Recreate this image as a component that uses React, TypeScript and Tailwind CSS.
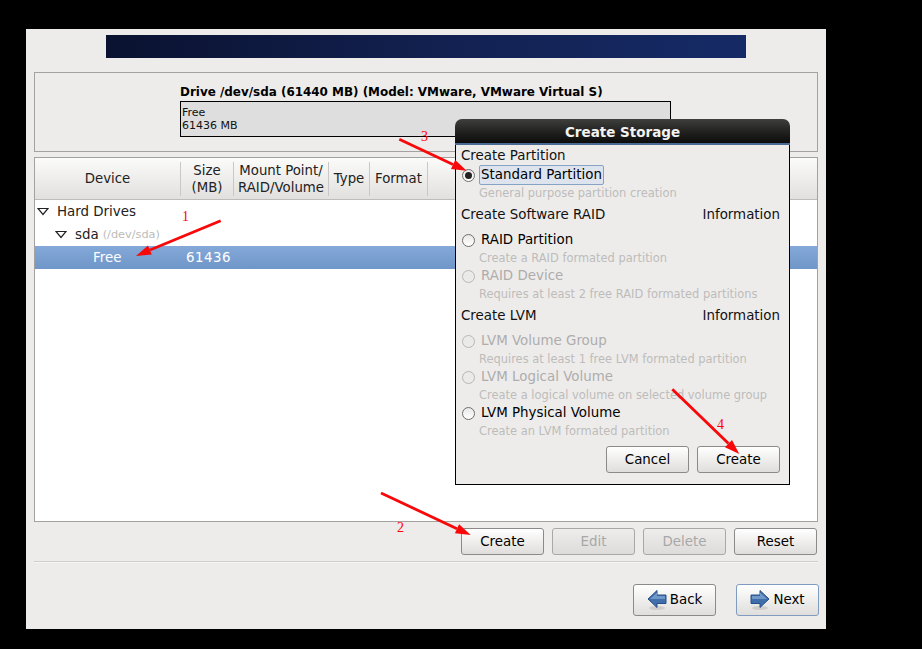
import React from "react";

const font = { fontFamily: '"DejaVu Sans", sans-serif' };

function Btn({ children, disabled, focus, w = "w-[83px]", h = "h-[27px] pt-[1px]" }: { children: React.ReactNode; disabled?: boolean; focus?: boolean; w?: string; h?: string }) {
  const cls = disabled
    ? "border-[#a9a8a6] bg-gradient-to-b from-[#eeedec] to-[#dddcda] text-[#a8a8a6]"
    : focus
    ? "border-[#7f9cc0] bg-gradient-to-b from-[#ffffff] to-[#dfdedc] text-black"
    : "border-[#8b8a88] bg-gradient-to-b from-[#ffffff] to-[#dfdedc] text-black";
  return <div className={`${w} ${h} ${cls} flex items-center justify-center gap-[3px] rounded-[3px] border text-[13.4px]`}>{children}</div>;
}

function Radio({ on, disabled }: { on?: boolean; disabled?: boolean }) {
  return (
    <span className={`ml-[6px] flex h-[13px] w-[13px] shrink-0 items-center justify-center rounded-full border ${disabled ? "border-[#b8b7b5] bg-[#eaeae8]" : "border-[#6f6e6c] bg-gradient-to-b from-[#e8e8e8] to-[#ffffff]"}`}>
      {on && <span className="h-[7px] w-[7px] rounded-full bg-[#222222]" />}
    </span>
  );
}

function Option({ label, desc, on, disabled, focus }: { label: string; desc: string; on?: boolean; disabled?: boolean; focus?: boolean }) {
  return (
    <div className="h-[36px]">
      <div className="flex h-[18px] items-center gap-[4px]">
        <Radio on={on} disabled={disabled} />
        <span className={`${focus ? "w-[125px] rounded-[2px] border border-[#86a3c6] bg-[#dde4ee] pl-[1px]" : "pl-[2px]"} flex h-[20px] items-center whitespace-nowrap text-[13.4px] ${disabled ? "text-[#aeadab]" : "text-black"}`}>{label}</span>
      </div>
      <div className="mt-[2px] flex h-[16px] items-center whitespace-nowrap pl-[23px] text-[11.45px] text-[#bdbcba]">{desc}</div>
    </div>
  );
}

function Head({ left, right, cls }: { left: string; right?: string; cls: string }) {
  return (
    <div className={`flex items-center justify-between pl-[5px] pr-[9px] text-[13.4px] text-[#111111] ${cls}`}>
      <span>{left}</span>
      {right && <span>{right}</span>}
    </div>
  );
}

function Col({ w, children }: { w: string; children: React.ReactNode }) {
  return (
    <div className={`${w} flex h-[34px] shrink-0 items-center justify-center border-r border-[#c9c8c6] text-center text-[13.3px] leading-[17px] text-[#222222]`}>
      <span className="whitespace-nowrap">{children}</span>
    </div>
  );
}

function Tri() {
  return (
    <svg width="12" height="9" viewBox="0 0 12 9" className="shrink-0">
      <path d="M1 1.5 H11 L6 7.5 Z" fill="#ffffff" stroke="#222222" strokeWidth="1.2" />
    </svg>
  );
}

function NavArrow({ dir }: { dir: "l" | "r" }) {
  return (
    <svg width="20" height="22" viewBox="0 0 20 22" className="shrink-0">
      <ellipse cx="10" cy="19" rx="8" ry="2" fill="#cfcecc" />
      <path
        d={dir === "l" ? "M1 10 L10 1.5 V6 H19 V14.5 H10 V18.5 Z" : "M19 10 L10 1.5 V6 H1 V14.5 H10 V18.5 Z"}
        fill="#3f6ea8"
        stroke="#28508a"
        strokeWidth="1"
      />
      <path d={dir === "l" ? "M3 10 L10 3.5 V7 H18 V10 Z" : "M2 7 H10 V3.5 L17 10 H2 Z"} fill="#6f98c8" />
    </svg>
  );
}

function Arrows() {
  const lines = [
    { x1: 194.7, y1: 191.7, x2: 124, y2: 221, head: "110,227 122,216.5 125.8,225.6" },
    { x1: 355, y1: 464, x2: 431, y2: 499.7, head: "444.7,506 428.9,504.2 433.1,495.2" },
    { x1: 373.3, y1: 110.3, x2: 427, y2: 135.4, head: "440.7,141.7 425,139.9 429.2,130.9" },
    { x1: 646.3, y1: 360.3, x2: 702.5, y2: 414.6, head: "713.3,425 699,418.2 706,411" },
  ];
  return (
    <svg width="800" height="600" viewBox="0 0 800 600" className="absolute left-0 top-0">
      {lines.map((l, i) => (
        <g key={i}>
          <line x1={l.x1} y1={l.y1} x2={l.x2} y2={l.y2} stroke="#f80808" strokeWidth="2.8" />
          <polygon points={l.head} fill="#f80808" />
        </g>
      ))}
    </svg>
  );
}

function Num({ n, cls }: { n: string; cls: string }) {
  return (
    <span className={`absolute text-[14px] leading-[16px] text-[#ff0000] ${cls}`} style={{ fontFamily: '"Liberation Serif", serif' }}>
      {n}
    </span>
  );
}

export default function App() {
  return (
    <div className="h-[649px] w-[922px] overflow-hidden bg-black pl-[26px] pt-[29px]" style={font}>
      <div className="relative flex h-[600px] w-[800px] flex-col bg-[#edeceb] px-[8px] pt-[6px]">
        <div className="mx-auto h-[23px] w-[640px] bg-gradient-to-r from-[#0a1230] via-[#12204f] to-[#152a66]" />

        <div className="mt-[14px] h-[80px] border border-[#a3a2a0] pl-[145px]">
          <div className="flex h-[28px] items-end whitespace-nowrap pb-[2px] text-[11.95px] font-bold leading-none text-black">
            Drive /dev/sda (61440 MB) (Model: VMware, VMware Virtual S)
          </div>
          <div className="h-[36px] w-[491px] border border-black bg-[#dedede] pl-[1px] pt-[4px] text-[11px] leading-[13px] text-[#111111]">
            <div>Free</div>
            <div>61436 MB</div>
          </div>
        </div>

        <div className="mt-[5px] flex h-[365px] flex-col border border-[#a3a2a0] bg-white">
          <div className="flex h-[42px] shrink-0 items-center border-b border-[#bdbcba] bg-gradient-to-b from-[#fbfbfa] to-[#e1e0de]">
            <Col w="w-[146px]">Device</Col>
            <Col w="w-[53px]">Size<br />(MB)</Col>
            <Col w="w-[95px]">Mount Point/<br />RAID/Volume</Col>
            <Col w="w-[41px]">Type</Col>
            <Col w="w-[58px]">Format</Col>
          </div>
          <div className="flex h-[23px] items-center pl-[2px] text-[13.4px] text-[#222222]">
            <Tri />
            <span className="ml-[8px] pt-[2px]">Hard Drives</span>
          </div>
          <div className="flex h-[23px] items-center pl-[20px] text-[13.4px] text-[#222222]">
            <Tri />
            <span className="ml-[8px] pt-[2px]">sda</span>
            <span className="ml-[4px] pt-[2px] text-[11.3px] text-[#bdbcba]">(/dev/sda)</span>
          </div>
          <div className="flex h-[23px] items-center bg-gradient-to-b from-[#84a9d9] to-[#6f96c8] pt-[1px] text-[13.4px] text-white">
            <span className="ml-[58px] w-[93px]">Free</span>
            <span className="tracking-[0.5px]">61436</span>
          </div>
        </div>

        <div className="mt-[6px] flex justify-end gap-[8px] pr-[1px]">
          <Btn>Create</Btn>
          <Btn disabled>Edit</Btn>
          <Btn disabled>Delete</Btn>
          <Btn>Reset</Btn>
        </div>

        <div className="mt-[6px] h-[2px] border-t border-[#cfcecc] bg-[#f7f6f5]" />

        <div className="-mr-[1px] mt-[21px] flex justify-end gap-[20px]">
          <Btn h="h-[32px]"><NavArrow dir="l" />Back</Btn>
          <Btn h="h-[32px]" focus><NavArrow dir="r" /><span>Next</span></Btn>
        </div>

        <div className="absolute left-[429px] top-[90px] flex h-[366px] w-[335px] flex-col">
          <div className="flex h-[26px] shrink-0 items-center justify-center rounded-t-[7px] border-b-2 border-[#4a6a95] bg-gradient-to-b from-[#3f3f3d] via-[#232321] to-[#0c0c0c] pt-[2px] text-[13.5px] font-bold text-[#f2f2f0]">
            Create Storage
          </div>
          <div className="flex flex-1 flex-col border border-t-0 border-black bg-[#edeceb]">
            <Head left="Create Partition" cls="h-[21px] pt-[1px]" />
            <Option label="Standard Partition" desc="General purpose partition creation" on focus />
            <Head left="Create Software RAID" right="Information" cls="mt-[2px] h-[22px]" />
            <div className="mt-[5px]">
              <Option label="RAID Partition" desc="Create a RAID formated partition" />
              <Option label="RAID Device" desc="Requires at least 2 free RAID formated partitions" disabled />
            </div>
            <Head left="Create LVM" right="Information" cls="mt-[2px] h-[22px]" />
            <div className="mt-[5px]">
              <Option label="LVM Volume Group" desc="Requires at least 1 free LVM formated partition" disabled />
              <Option label="LVM Logical Volume" desc="Create a logical volume on selected volume group" disabled />
              <Option label="LVM Physical Volume" desc="Create an LVM formated partition" />
            </div>
            <div className="mt-[6px] flex justify-end gap-[8px] pr-[9px]">
              <Btn>Cancel</Btn>
              <Btn>Create</Btn>
            </div>
          </div>
        </div>

        <Arrows />
        <Num n="1" cls="left-[156px] top-[180px]" />
        <Num n="2" cls="left-[371px] top-[491px]" />
        <Num n="3" cls="left-[395px] top-[100px]" />
        <Num n="4" cls="left-[691px] top-[388px]" />
      </div>
    </div>
  );
}
